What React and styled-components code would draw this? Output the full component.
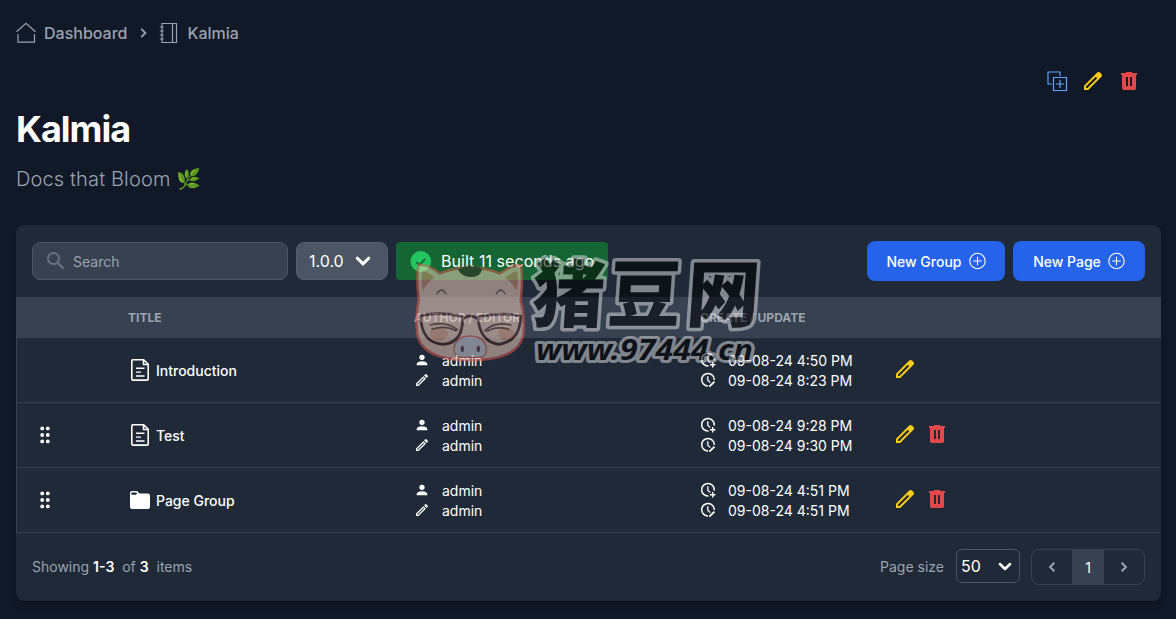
import React, { useState } from 'react';
import styled, { createGlobalStyle } from 'styled-components';

const GlobalStyle = createGlobalStyle`
  * {
    box-sizing: border-box;
  }

  body {
    margin: 0;
    background-color: #111827;
    color: #fff;
    font-family: Inter, "Noto Sans CJK SC", sans-serif;
    font-size: 14px;
    line-height: 20px;
  }

  button,
  input {
    font-family: inherit;
  }
`;

const Page = styled.div`
  position: relative;
  width: 1176px;
  height: 619px;
  padding: 21px 15px 0 16px;
  overflow: hidden;
`;

const Breadcrumb = styled.nav`
  display: flex;
  align-items: center;
  height: 24px;
  font-size: 16px;
  font-weight: 500;
  color: #9ca3af;
`;

const Crumb = styled.a`
  display: flex;
  align-items: center;
  gap: 8px;
`;

const CrumbArrow = styled.svg`
  margin: 0 11px 0 12px;
`;

const DocActions = styled.div`
  display: flex;
  justify-content: flex-end;
  gap: 12px;
  height: 24px;
  margin-top: 24px;
  padding-right: 20px;
`;

const IconButton = styled.button`
  display: flex;
  padding: 0;
  border: 0;
  background: none;
  color: ${props => props.color};
  cursor: pointer;
`;

const DocTitle = styled.h1`
  margin: 16px 0 0;
  font-size: 36px;
  font-weight: 700;
  line-height: 40px;
  letter-spacing: -1px;
`;

const DocDescription = styled.p`
  margin: 16px 0 0;
  font-size: 20px;
  font-weight: 300;
  line-height: 28px;
  letter-spacing: 0.13px;
  color: #9ca3af;
`;

const Card = styled.section`
  height: 376px;
  margin-top: 32px;
  border-radius: 8px;
  background-color: #1f2937;
  box-shadow: 0 4px 6px -1px rgba(0, 0, 0, 0.3);
  overflow: hidden;
`;

const Toolbar = styled.div`
  display: flex;
  align-items: center;
  gap: 8px;
  height: 72px;
  padding: 0 16px;
`;

const SearchBox = styled.label`
  display: flex;
  align-items: center;
  gap: 5px;
  width: 256px;
  height: 38px;
  padding: 0 11px;
  border: 1px solid #4b5563;
  border-radius: 8px;
  background-color: #374151;
  color: #6b7280;
`;

const SearchInput = styled.input`
  width: 190px;
  padding: 2px 0 0;
  border: 0;
  outline: 0;
  background: none;
  color: #fff;
  font-size: 14px;
  line-height: 20px;

  &::placeholder {
    color: #9ca3af;
    opacity: 1;
  }
`;

const VersionButton = styled.button`
  display: flex;
  align-items: center;
  justify-content: space-between;
  width: 92px;
  height: 38px;
  padding: 0 16px 0 12px;
  border: 1px solid #566070;
  border-radius: 8px;
  background-color: #4b5563;
  color: #fff;
  font-size: 16px;
`;

const BuildStatus = styled.div`
  display: flex;
  align-items: center;
  gap: 8px;
  width: 212px;
  height: 38px;
  padding-left: 12px;
  border-radius: 4px;
  background-color: #166534;
  font-size: 16px;
  letter-spacing: 0.05px;
`;

const ToolbarActions = styled.div`
  display: flex;
  gap: 8px;
  margin-left: auto;
`;

const PrimaryButton = styled.button`
  display: flex;
  align-items: center;
  justify-content: center;
  gap: 6px;
  width: ${props => props.$width};
  height: 40px;
  padding: 0;
  border: 0;
  border-radius: 8px;
  background-color: #2563eb;
  color: #fff;
  font-size: 14px;
  font-weight: 500;
`;

const Table = styled.div`
  border-left: 1px solid #374151;
`;

const TableRow = styled.div`
  display: grid;
  grid-template-columns: 95px 286px 286px 192px 1fr;
  align-items: center;
  height: 65px;
  border-bottom: 1px solid #374151;
`;

const TableHead = styled(TableRow)`
  height: 41px;
  border-bottom: 0;
  background-color: #374151;
  color: #9ca3af;
  font-size: 12px;
  font-weight: 700;
  line-height: 16px;
  text-transform: uppercase;
`;

const Cell = styled.div`
  padding-left: 16px;
`;

const TitleCell = styled(Cell)`
  display: flex;
  align-items: center;
  gap: 4px;
  font-weight: 500;
`;

const RowTitle = styled.span`
  padding-top: 2px;
`;

const DragCell = styled(Cell)`
  display: flex;
`;

const ActionCell = styled.div`
  display: flex;
  gap: 8px;
  padding: 0 0 3px 17px;
`;

const MetaLine = styled.div`
  display: flex;
  align-items: center;
  gap: 12px;
  height: 20px;
`;

const MetaText = styled.span`
  padding-top: 2px;
`;

const Footer = styled.footer`
  display: flex;
  align-items: center;
  justify-content: space-between;
  height: 68px;
  padding: 0 16px;
  color: #9ca3af;
`;

const Strong = styled.span`
  font-weight: 600;
  color: #fff;
`;

const Paging = styled.div`
  display: flex;
  align-items: center;
`;

const PageSize = styled.button`
  display: flex;
  align-items: center;
  justify-content: space-between;
  width: 64px;
  height: 34px;
  margin: 0 11px 2px 12px;
  padding: 0 7px 0 4px;
  border: 1px solid #4b5563;
  border-radius: 6px;
  background-color: #1f2937;
  color: #fff;
  font-size: 16px;
`;

const Pager = styled.div`
  display: flex;
  width: 114px;
  height: 36px;
  border: 1px solid #374151;
  border-radius: 8px;
  overflow: hidden;
`;

const PagerButton = styled.button`
  display: flex;
  align-items: center;
  justify-content: center;
  flex: ${props => (props.$active ? '0 0 32px' : '1')};
  padding: 0;
  border: 0;
  background-color: ${props => (props.$active ? '#374151' : 'transparent')};
  color: ${props => (props.$active ? '#fff' : '#9ca3af')};
  font-size: 14px;
`;

const Watermark = styled.svg`
  position: absolute;
  left: 400px;
  top: 230px;
  opacity: 0.52;
  overflow: visible;
  pointer-events: none;
`;

const paths = {
  edit: 'M5 19h1.425L16.2 9.225L14.775 7.8L5 17.575zm-2 2v-4.25L16.2 3.575q.3-.275.663-.425t.762-.15t.775.15t.65.45L20.425 5q.3.275.438.65T21 6.4q0 .4-.137.763t-.438.662L7.25 21z',
  trash: 'M7 21q-.825 0-1.412-.587T5 19V6H4V4h5V3h6v1h5v2h-1v13q0 .825-.587 1.413T17 21zm2-4h2V8H9zm4 0h2V8h-2z',
  search: 'M15.5 14h-.79l-.28-.27A6.47 6.47 0 0 0 16 9.5 6.5 6.5 0 1 0 9.5 16c1.61 0 3.09-.59 4.23-1.57l.27.28v.79l5 4.99L20.49 19zm-6 0C7.01 14 5 11.99 5 9.5S7.01 5 9.5 5 14 7.01 14 9.5 11.99 14 9.5 14z',
  person: 'M12 4a4 4 0 1 1 0 8a4 4 0 0 1 0-8m0 10c4.42 0 8 1.79 8 4v2H4v-2c0-2.21 3.58-4 8-4',
  pencil: 'M14.06 9l.94.94L5.92 19H5v-.92zm3.6-6c-.25 0-.51.1-.7.29l-1.83 1.83l3.75 3.75l1.83-1.83c.39-.39.39-1.04 0-1.41l-2.34-2.34c-.2-.2-.45-.29-.71-.29m-3.6 3.19L3 17.25V21h3.75L17.81 9.94z',
  folder: 'M2 5q0-2 2-2h5l2.4 2.4H20q2 0 2 2V19q0 2-2 2H4q-2 0-2-2zm1.4 1.8h4.4l1.4-1.4-1-1H4q-.6 0-.6.6z'
};

const Glyph = ({ name, size = 24 }) => (
  <svg width={size} height={size} viewBox="0 0 24 24" fill="currentColor" fillRule="evenodd">
    <path d={paths[name]} />
  </svg>
);

const HomeIcon = () => (
  <svg width="20" height="22" viewBox="0 0 20 22" fill="none" stroke="currentColor" strokeWidth="1.2">
    <path d="M.5 9.8 10 1.3l9.5 8.5M2 12v8.1h16.5V12" />
  </svg>
);

const NotebookIcon = () => (
  <svg width="20" height="22" viewBox="0 0 20 22" fill="none" stroke="currentColor" strokeWidth="1.2">
    <path d="M3 1.5h14.5v19H3zM13.5 1.5v19M.8 5h4M.8 9h4M.8 13h4M.8 17h4" />
  </svg>
);

const CopyIcon = () => (
  <svg width="24" height="24" viewBox="0 0 24 24" fill="none" stroke="currentColor" strokeWidth="1.2">
    <path d="M7 15H3V3h12v4M8.5 8.5h13v13h-13zM15 11v8M11 15h8" />
  </svg>
);

const PlusCircleIcon = () => (
  <svg width="18" height="18" viewBox="0 0 18 18" fill="none" stroke="currentColor" strokeWidth="1.1">
    <circle cx="9.5" cy="9" r="7.7" />
    <path d="M9.5 4.8v8.4M5.3 9h8.4" />
  </svg>
);

const CheckIcon = () => (
  <svg width="25" height="25" viewBox="0 0 25 25" fill="none">
    <circle cx="12.8" cy="12.5" r="10.4" fill="#22c55e" />
    <path d="m8.3 13 3 3 6-6.2" stroke="#166534" strokeWidth="1.8" />
  </svg>
);

const Chevron = ({ width = 16, height = 10 }) => (
  <svg width={width} height={height} viewBox="0 0 16 10" fill="none" stroke="currentColor" strokeWidth="3" strokeLinecap="round" strokeLinejoin="round">
    <path d="m2.2 2.2 5.8 5.6 5.8-5.6" />
  </svg>
);

const ArrowIcon = ({ left }) => (
  <svg width="8" height="12" viewBox="0 0 8 12" fill="none" stroke="currentColor" strokeWidth="2">
    <path d={left ? 'M6.3 1.8 2.1 6l4.2 4.2' : 'M1.7 1.8 5.9 6l-4.2 4.2'} />
  </svg>
);

const DocumentIcon = () => (
  <svg width="24" height="24" viewBox="0 0 24 24" fill="none" stroke="currentColor" strokeWidth="1.6">
    <path d="M4.5 1.8h11.2l4.5 4.5v14.6q0 1.2-1.2 1.2H5q-1.2 0-1.2-1.2V3q0-1.2 1.2-1.2zM15.5 1.8v4.7h4.7" strokeLinejoin="round" />
    <path d="M8 10.2h8.5M8 14.1h5M8 18h8.5" strokeWidth="1.4" />
  </svg>
);

const DragIcon = () => (
  <svg width="24" height="24" viewBox="0 0 24 24" fill="currentColor">
    {[5.4, 12, 18.4].map(y => (
      <React.Fragment key={y}>
        <circle cx="9.2" cy={y} r="1.9" />
        <circle cx="14.8" cy={y} r="1.9" />
      </React.Fragment>
    ))}
  </svg>
);

const ClockIcon = ({ edited }) => (
  <svg width="16" height="16" viewBox="0 0 16 16" fill="none" stroke="currentColor" strokeWidth="1.5">
    <path d={edited ? 'M8 14A6.3 6.3 0 1 1 14.3 8' : 'M8.5 14A6.3 6.3 0 1 1 14.2 8.6'} />
    <path d="M7.8 4.2v4l2.5 2.4" strokeWidth="1.3" />
    <path d={edited ? 'm9.3 14.6 5.2-5' : 'M12.7 10v5.4M10 12.7h5.4'} strokeWidth={edited ? 1.9 : 1.4} />
  </svg>
);

const rows = [
  { title: 'Introduction', created: '09-08-24 4:50 PM', updated: '09-08-24 8:23 PM', fixed: true },
  { title: 'Test', created: '09-08-24 9:28 PM', updated: '09-08-24 9:30 PM' },
  { title: 'Page Group', created: '09-08-24 4:51 PM', updated: '09-08-24 4:51 PM', group: true }
];

const PigWatermark = () => (
  <Watermark width="370" height="160" viewBox="0 -20 370 160">
    <g transform="scale(.3333)" strokeLinejoin="round" strokeLinecap="round">
      <path
        d="M56 150C51 110 50 70 56 44C78 44 100 54 119 70Q210 35 300 70Q335 45 363 45Q370 95 362 150Q374 195 371 245Q365 331 210 331Q58 331 51 245Q46 195 56 150Z"
        fill="#f5d2bd"
        stroke="#e6584d"
        strokeWidth="7"
      />
      <path d="M69 122Q61 91 68 63Q88 68 103 83Q82 95 69 122M350 122Q357 91 351 63Q332 68 315 83Q336 95 350 122" fill="#dd9170" />
      <path d="M174 59Q213 35 247 58Q239 83 211 81Q186 80 174 59Z" fill="#382a24" />
      <ellipse cx="117" cy="252" rx="28" ry="19" fill="#efad91" />
      <ellipse cx="319" cy="252" rx="25" ry="19" fill="#efad91" />
      <path d="M111 132q13-24 27 0M289 132q13-24 26 0" fill="none" stroke="#76615b" strokeWidth="4" />
      <path d="M91 225Q137 212 172 239M96 238Q135 225 168 242M333 225Q284 213 255 242M326 238Q289 227 262 244" fill="none" stroke="#6a4036" strokeWidth="5" />
      <path d="M62 198Q126 182 188 201Q190 279 129 283Q64 279 62 198ZM233 201Q302 185 362 198Q361 274 297 283Q240 277 233 201ZM188 207q23-18 45 0" fill="none" stroke="#4a2222" strokeWidth="8" />
      <path d="M163 290Q169 258 211 258Q251 258 258 290Q264 318 240 322H181Q158 318 163 290Z" fill="#dcdbe6" stroke="#e0695f" strokeWidth="4" />
      <ellipse cx="187" cy="297" rx="5" ry="10" fill="#6b4a55" />
      <ellipse cx="235" cy="297" rx="5" ry="10" fill="#6b4a55" />
    </g>
    <g fill="#000" stroke="#dcdcde" strokeLinejoin="round" paintOrder="stroke">
      <text
        transform="translate(130 70.5) skewX(-4)"
        x="0 76.5 155"
        fontFamily="'Noto Sans CJK SC', sans-serif"
        fontSize="73"
        fontWeight="900"
        strokeWidth="7"
      >
        猪豆网
      </text>
      <text
        x="136"
        y="110"
        fontFamily="'Noto Sans', sans-serif"
        fontSize="28"
        fontWeight="700"
        fontStyle="italic"
        textLength="217"
        lengthAdjust="spacingAndGlyphs"
        strokeWidth="6"
      >
        www.97444.cn
      </text>
    </g>
  </Watermark>
);

const App = () => {
  const [search, setSearch] = useState('');

  return (
    <Page>
      <GlobalStyle />
      <Breadcrumb>
        <Crumb><HomeIcon />Dashboard</Crumb>
        <CrumbArrow width="9" height="12" viewBox="0 0 9 12" fill="none" stroke="currentColor" strokeWidth="1.8">
          <path d="m2.2 1.8 4.2 4.2-4.2 4.2" />
        </CrumbArrow>
        <Crumb><NotebookIcon />Kalmia</Crumb>
      </Breadcrumb>

      <DocActions>
        <IconButton color="#60a5fa" aria-label="Clone"><CopyIcon /></IconButton>
        <IconButton color="#facc15" aria-label="Edit"><Glyph name="edit" /></IconButton>
        <IconButton color="#e5484a" aria-label="Delete"><Glyph name="trash" /></IconButton>
      </DocActions>

      <DocTitle>Kalmia</DocTitle>
      <DocDescription>Docs that Bloom 🌿</DocDescription>

      <Card>
        <Toolbar>
          <SearchBox>
            <Glyph name="search" />
            <SearchInput placeholder="Search" value={search} onChange={e => setSearch(e.target.value)} />
          </SearchBox>
          <VersionButton>1.0.0<Chevron /></VersionButton>
          <BuildStatus><CheckIcon />Built 11 seconds ago</BuildStatus>
          <ToolbarActions>
            <PrimaryButton $width="138px">New Group <PlusCircleIcon /></PrimaryButton>
            <PrimaryButton $width="132px">New Page <PlusCircleIcon /></PrimaryButton>
          </ToolbarActions>
        </Toolbar>

        <Table>
          <TableHead>
            <Cell />
            <Cell>Title</Cell>
            <Cell>Author / Editor</Cell>
            <Cell>Create / Update</Cell>
          </TableHead>
          {rows.map(row => (
            <TableRow key={row.title}>
              <DragCell>{!row.fixed && <DragIcon />}</DragCell>
              <TitleCell>
                {row.group ? <Glyph name="folder" /> : <DocumentIcon />}
                <RowTitle>{row.title}</RowTitle>
              </TitleCell>
              <Cell>
                <MetaLine><Glyph name="person" size={16} /><MetaText>admin</MetaText></MetaLine>
                <MetaLine><Glyph name="pencil" size={16} /><MetaText>admin</MetaText></MetaLine>
              </Cell>
              <Cell>
                <MetaLine><ClockIcon /><MetaText>{row.created}</MetaText></MetaLine>
                <MetaLine><ClockIcon edited /><MetaText>{row.updated}</MetaText></MetaLine>
              </Cell>
              <ActionCell>
                <IconButton color="#facc15" aria-label="Edit"><Glyph name="edit" /></IconButton>
                {!row.fixed && (
                  <IconButton color="#e5484a" aria-label="Delete"><Glyph name="trash" /></IconButton>
                )}
              </ActionCell>
            </TableRow>
          ))}
        </Table>

        <Footer>
          <div>Showing <Strong>1-3</Strong>&nbsp; of <Strong>3</Strong>&nbsp; items</div>
          <Paging>
            Page size
            <PageSize>50<Chevron width={14} height={9} /></PageSize>
            <Pager>
              <PagerButton aria-label="Previous"><ArrowIcon left /></PagerButton>
              <PagerButton $active>1</PagerButton>
              <PagerButton aria-label="Next"><ArrowIcon /></PagerButton>
            </Pager>
          </Paging>
        </Footer>
      </Card>

      <PigWatermark />
    </Page>
  );
};

export default App;
